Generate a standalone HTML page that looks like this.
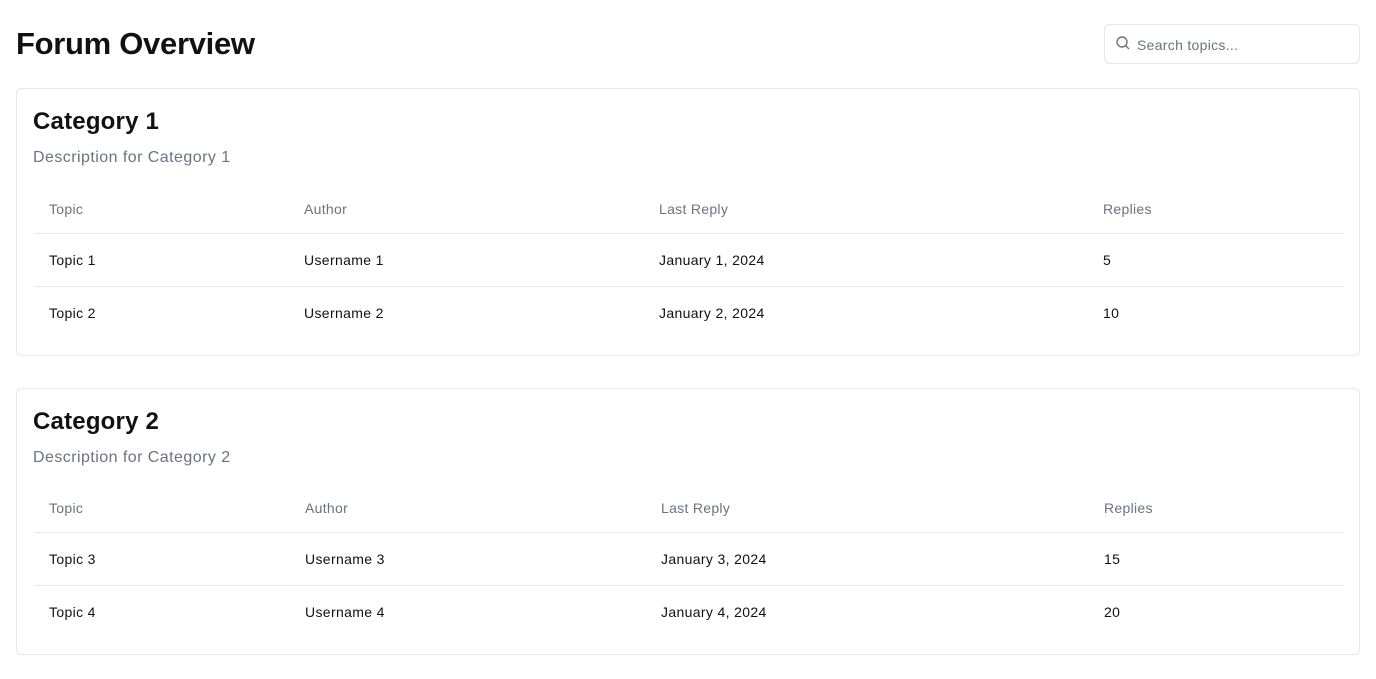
<!DOCTYPE html>
<html><head><style>
body{margin:0;background:#fff;font-family:"Liberation Sans",sans-serif;color:#111;width:1376px;height:679px;position:relative;overflow:hidden}
.a{position:absolute;white-space:nowrap;line-height:1}
h1{position:absolute;left:16px;top:27px;margin:0;font-size:31px;font-weight:bold;line-height:34px;letter-spacing:-0.3px}
.search{position:absolute;left:1104px;top:24px;width:254px;height:38px;border:1px solid #e5e7eb;border-radius:6px}
.card{position:absolute;left:16px;width:1342px;border:1px solid #e5e7eb;border-radius:6px}
.t{font-size:24px;font-weight:bold;letter-spacing:0.2px}
.d{font-size:16px;color:#6b7280;letter-spacing:0.45px}
.h{font-size:14px;color:#6b7280;letter-spacing:0.3px}
.c{font-size:14px;color:#111;letter-spacing:0.35px}
.ln{position:absolute;left:17px;width:1310px;height:1px;background:#e5e7eb}
</style></head><body>
<h1>Forum Overview</h1>
<div class="search">
<svg style="position:absolute;left:10px;top:10px" width="16" height="16" viewBox="0 0 16 16" fill="none" stroke="#6b7280" stroke-width="1.4"><circle cx="7" cy="7" r="5"/><path d="M10.7 10.7L14 14"/></svg>
<span class="a" style="left:32px;top:13px;font-size:14px;color:#6b7280;letter-spacing:0.3px">Search topics...</span>
</div>

<div class="card" style="top:88px;height:266px">
<span class="a t" style="left:16px;top:21px">Category 1</span>
<span class="a d" style="left:16px;top:61px">Description for Category 1</span>
<span class="a h" style="left:32px;top:113px">Topic</span><span class="a h" style="left:287px;top:113px">Author</span><span class="a h" style="left:642px;top:113px">Last Reply</span><span class="a h" style="left:1086px;top:113px">Replies</span>
<div class="ln" style="top:144px"></div>
<span class="a c" style="left:32px;top:164px">Topic 1</span><span class="a c" style="left:287px;top:164px">Username 1</span><span class="a c" style="left:642px;top:164px">January 1, 2024</span><span class="a c" style="left:1086px;top:164px">5</span>
<div class="ln" style="top:197px"></div>
<span class="a c" style="left:32px;top:217px">Topic 2</span><span class="a c" style="left:287px;top:217px">Username 2</span><span class="a c" style="left:642px;top:217px">January 2, 2024</span><span class="a c" style="left:1086px;top:217px">10</span>
</div>

<div class="card" style="top:388px;height:265px">
<span class="a t" style="left:16px;top:21px">Category 2</span>
<span class="a d" style="left:16px;top:61px">Description for Category 2</span>
<span class="a h" style="left:32px;top:112px">Topic</span><span class="a h" style="left:288px;top:112px">Author</span><span class="a h" style="left:644px;top:112px">Last Reply</span><span class="a h" style="left:1087px;top:112px">Replies</span>
<div class="ln" style="top:143px"></div>
<span class="a c" style="left:32px;top:163px">Topic 3</span><span class="a c" style="left:288px;top:163px">Username 3</span><span class="a c" style="left:644px;top:163px">January 3, 2024</span><span class="a c" style="left:1087px;top:163px">15</span>
<div class="ln" style="top:196px"></div>
<span class="a c" style="left:32px;top:216px">Topic 4</span><span class="a c" style="left:288px;top:216px">Username 4</span><span class="a c" style="left:644px;top:216px">January 4, 2024</span><span class="a c" style="left:1087px;top:216px">20</span>
</div>
</body></html>
